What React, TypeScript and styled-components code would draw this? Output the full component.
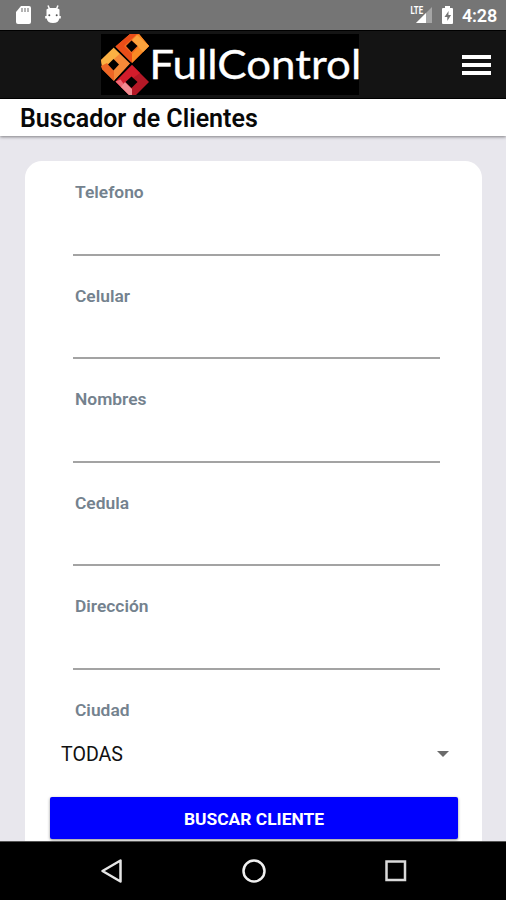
import React from "react";
import styled, { createGlobalStyle } from "styled-components";

const GlobalStyle = createGlobalStyle`
  * { box-sizing: border-box; }
  body { margin: 0; font-family: Roboto, "Liberation Sans", sans-serif; background: #e8e7ed; }
`;

const Screen = styled.div`
  display: flex;
  flex-direction: column;
  width: 506px;
  height: 900px;
  overflow: hidden;
  background: #e8e7ed;
`;

const StatusBar = styled.div`
  display: flex;
  flex: none;
  align-items: center;
  height: 30px;
  padding: 0 9px 0 14px;
  background: #757575;
  color: #fff;
`;

const StatusIcons = styled.div`
  display: flex;
  flex: 1;
`;

const Clock = styled.span`
  font-size: 18px;
  font-weight: 600;
  line-height: 30px;
  margin-top: 2px;
  letter-spacing: -0.2px;
`;

const Header = styled.header`
  display: flex;
  flex: none;
  justify-content: space-between;
  height: 69px;
  padding: 3px 15px 0 101px;
  background: #141414;
  border-top: 1px solid #000;
  border-bottom: 1px solid #000;
`;

const Logo = styled.svg`
  display: block;
  width: 258px;
  height: 61px;
  background: #000;
`;

const Wordmark = styled.text`
  font-family: Lato, sans-serif;
  font-size: 41.5px;
  font-weight: 400;
  fill: #fff;
  stroke: #fff;
  stroke-width: 0.3px;
`;

const MenuButton = styled.button`
  display: flex;
  flex-direction: column;
  gap: 4px;
  width: 29px;
  margin: 21px 0 0;
  padding: 0;
  border: 0;
  background: none;
`;

const MenuLine = styled.span`
  width: 29px;
  height: 4px;
  background: #fff;
`;

const TitleBar = styled.h1`
  flex: none;
  z-index: 1;
  height: 37px;
  margin: 0;
  padding-left: 20px;
  background: #fff;
  box-shadow: 0 1px 3px rgba(0, 0, 0, 0.45);
  color: #080808;
  font-size: 25px;
  font-weight: 600;
  line-height: 40px;
  white-space: nowrap;
`;

const Content = styled.main`
  flex: 1;
  min-height: 0;
  overflow: hidden;
  padding: 25px 24px 0 25px;
`;

const Card = styled.form`
  height: 760px;
  padding: 0 24px 0 25px;
  border-radius: 17px;
  background: #fff;
`;

const Field = styled.label`
  display: block;
  height: 103.6px;
  padding: 20px 18px 0 23px;
`;

const Label = styled.span`
  display: block;
  padding-left: 2px;
  color: #74828e;
  font-size: 17.4px;
  font-weight: 600;
  line-height: 22px;
`;

const Input = styled.input`
  display: block;
  width: 100%;
  height: 52.6px;
  padding: 0 2px;
  border: 0;
  border-bottom: 2px solid #a3a3a3;
  outline: 0;
  background: none;
  font: 18px Roboto, sans-serif;
`;

const CityField = styled.div`
  height: 118px;
  padding: 20px 8px 0 11px;
`;

const CityLabel = styled(Label)`
  padding-left: 14px;
`;

const Picker = styled.div`
  display: flex;
  align-items: center;
  justify-content: space-between;
  height: 24px;
  margin-top: 21px;
  color: #111;
  font-size: 19.6px;
`;

const PickerValue = styled.span`
  padding-top: 2px;
`;

const SearchButton = styled.button`
  display: block;
  width: 408px;
  height: 42px;
  padding: 2px 0 0;
  border: 0;
  border-radius: 2px;
  background: #00f;
  box-shadow: 0 1px 3px rgba(0, 0, 0, 0.45);
  color: #fff;
  font: 700 17.4px Roboto, sans-serif;
`;

const NavBar = styled.nav`
  display: flex;
  flex: none;
  justify-content: space-between;
  align-items: center;
  height: 59px;
  padding: 0 97px 0 99px;
  border-top: 1px solid #555;
  background: #000;
`;

const fields = ["Telefono", "Celular", "Nombres", "Cedula", "Dirección"];

const SdCardIcon = () => (
  <svg width="18" height="20" viewBox="0 0 18 20">
    <path d="M7 1h8q2 0 2 2v14q0 2-2 2H4q-2 0-2-2V7z" fill="#fff" />
    <path d="M8 3v4M11 3v4M14 3v4" stroke="#8b8b8b" strokeWidth="1.3" />
  </svg>
);

const DroidIcon = () => (
  <svg width="18" height="20" viewBox="0 0 18 20">
    <path d="M4 .5l1.8 4M14 .5l-1.8 4" stroke="#fff" strokeWidth="1.5" />
    <path d="M2.5 4.5Q4 3 6 3h6q2 0 3.5 1.5v6.5h1.3v2.5h-1.5Q14.5 18 9 18t-6.3-4.5H1.2V11h1.3z" fill="#fff" />
    <circle cx="5.3" cy="10.3" r="1" fill="#555" />
    <circle cx="12.7" cy="10.3" r="1" fill="#555" />
  </svg>
);

const Gap = styled.span<{ $w: number }>`
  flex: none;
  width: ${(p) => p.$w}px;
`;

const NetworkLabel = styled.text`
  font: 700 10px Roboto, sans-serif;
  fill: #fff;
`;

export default function App() {
  return (
    <>
      <GlobalStyle />
      <Screen>
        <StatusBar>
          <StatusIcons>
            <SdCardIcon />
            <Gap $w={12} />
            <DroidIcon />
          </StatusIcons>
          <svg width="24" height="20" viewBox="0 0 24 20">
            <path d="M22 2v16H6z" fill="#a5a5a5" />
            <path d="M16 8v10H6z" fill="#fff" />
            <path d="M0 1h13v8H0z" fill="#757575" />
            <NetworkLabel x="0.5" y="9" textLength="12.5" lengthAdjust="spacingAndGlyphs">LTE</NetworkLabel>
          </svg>
          <Gap $w={7} />
          <svg width="13" height="20" viewBox="0 0 13 20">
            <path d="M4 1h5v2h2q1 0 1 1v14q0 1-1 1H2q-1 0-1-1V4q0-1 1-1h2z" fill="#fff" />
            <path d="M7.6 6L3.5 12h2.8v4l3.8-6H7.4z" fill="#757575" />
          </svg>
          <Gap $w={8} />
          <Clock>4:28</Clock>
        </StatusBar>
        <Header>
          <Logo viewBox="101 34 258 61" role="img" aria-label="FullControl">
            <path d="M115.5 46.5L130 34h9L149 46 132 63z" fill="#f36b21" />
            <path d="M115.5 46.5L130 34h7L124 46l8 8v9z" fill="#ea4d18" />
            <path d="M139 34L149 46 132 63V54l7-8-6-7z" fill="#f98a24" />
            <path d="M137 35L149 46l-6 6-11-12z" fill="#fba33d" />
            <path d="M131.5 40.5l6 5.5-6 6-5.5-6z" fill="#000" />
            <path d="M101 60l13-12.5L130.5 63 114 81 102 69z" fill="#f58a38" />
            <path d="M101 60l13-12.5 6 6-12 11-5 5z" fill="#fbb143" />
            <path d="M101 66l6-3 7 8v10L102 69z" fill="#ee6625" />
            <path d="M113.5 59l5.5 5.5-5.5 6-5.5-6z" fill="#000" />
            <path d="M115.5 81.5L132 65l17 17-13 13h-7z" fill="#b41826" />
            <path d="M115.5 81.5L132 65l8 8-14 10-4 5z" fill="#d31c2b" />
            <path d="M115.5 81.5l5-2 11 15h-3z" fill="#f06975" />
            <path d="M121 87l4-5 7 7v6h-3z" fill="#f28b91" />
            <path d="M131.5 76.5l6 5.5-6 6-6-6z" fill="#000" />
            <path d="M114 47l18 17.5M132 63l-17 18" stroke="#000" strokeWidth="1.2" />
            <Wordmark x="149.3" y="79" textLength="212" lengthAdjust="spacingAndGlyphs">FullControl</Wordmark>
          </Logo>
          <MenuButton type="button" aria-label="Menu">
            <MenuLine /><MenuLine /><MenuLine />
          </MenuButton>
        </Header>
        <TitleBar>Buscador de Clientes</TitleBar>
        <Content>
          <Card>
            {fields.map((name) => (
              <Field key={name}>
                <Label>{name}</Label>
                <Input />
              </Field>
            ))}
            <CityField>
              <CityLabel>Ciudad</CityLabel>
              <Picker>
                <PickerValue>TODAS</PickerValue>
                <svg width="14" height="8" viewBox="0 0 14 8"><path d="M1 1h12L7 7z" fill="#6b6b6b" /></svg>
              </Picker>
            </CityField>
            <SearchButton type="button">BUSCAR CLIENTE</SearchButton>
          </Card>
        </Content>
        <NavBar>
          <svg width="25" height="26" viewBox="0 0 25 26">
            <path d="M21.5 2.5v21L3.5 13z" fill="none" stroke="#e6e6e6" strokeWidth="2.5" strokeLinejoin="round" />
          </svg>
          <svg width="26" height="26" viewBox="0 0 26 26">
            <circle cx="13" cy="13" r="10.5" fill="none" stroke="#f0f0f0" strokeWidth="2.5" />
          </svg>
          <svg width="26" height="26" viewBox="0 0 26 26">
            <rect x="3.5" y="3.5" width="18.5" height="18.5" fill="none" stroke="#dadada" strokeWidth="2.5" />
          </svg>
        </NavBar>
      </Screen>
    </>
  );
}
